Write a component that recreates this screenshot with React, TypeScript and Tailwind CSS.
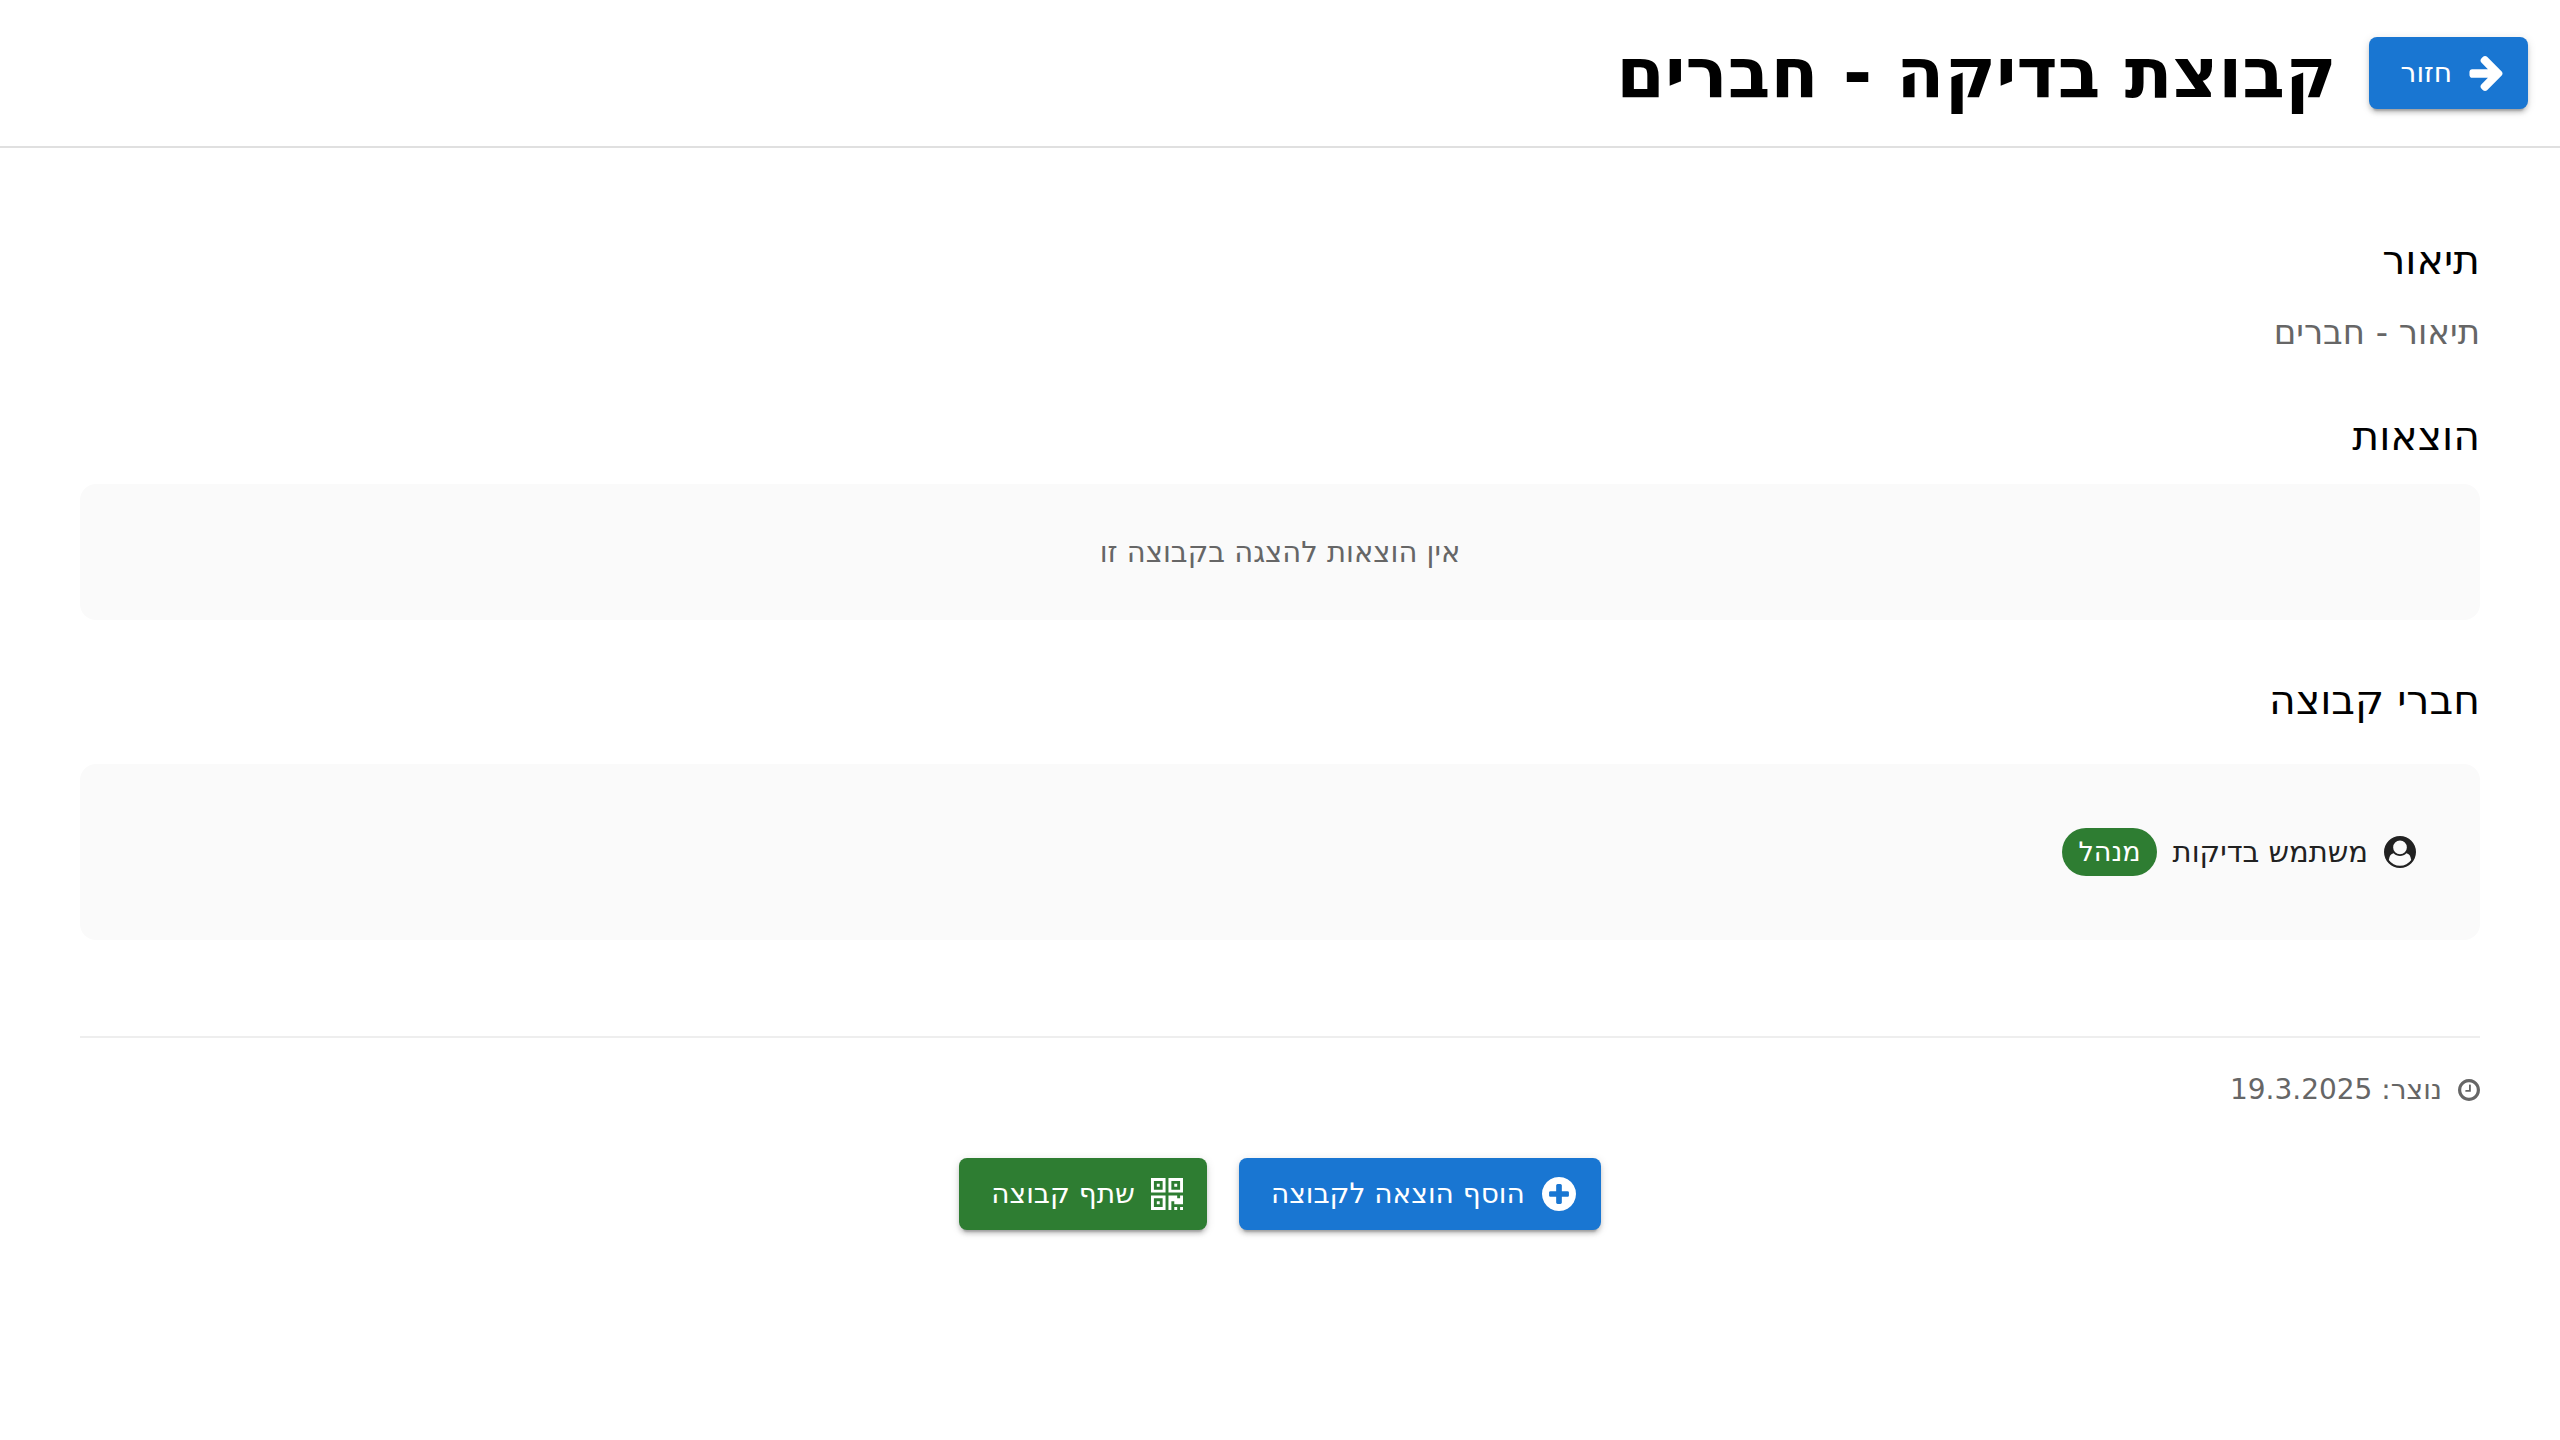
import type { ReactNode } from "react";

type IconProps = { viewBox: string; d: string; className: string };

function Icon({ viewBox, d, className }: IconProps) {
  return (
    <svg viewBox={viewBox} className={`shrink-0 fill-current ${className}`} aria-hidden="true">
      <path d={d} />
    </svg>
  );
}

const ARROW =
  "M1472 960q0 54-37 91l-651 651q-39 37-91 37-51 0-90-37l-75-75q-38-38-38-91t38-91l293-293H117q-52 0-84.5-37.5T0 1024V896q0-53 32.5-90.5T117 768h704L528 474q-38-36-38-90t38-90l75-75q38-38 90-38 53 0 91 38l651 651q37 35 37 90z";
const PLUS_CIRCLE =
  "M1216 960V832q0-26-19-45t-45-19H896V512q0-26-19-45t-45-19H704q-26 0-45 19t-19 45v256H384q-26 0-45 19t-19 45v128q0 26 19 45t45 19h256v256q0 26 19 45t45 19h128q26 0 45-19t19-45v-256h256q26 0 45-19t19-45zm320-64q0 209-103 385.5T1153.5 1561 768 1664t-385.5-103T103 1281.5 0 896t103-385.5T382.5 231 768 128t385.5 103T1433 510.5 1536 896z";
const CLOCK =
  "M896 544v448q0 14-9 23t-23 9H544q-14 0-23-9t-9-23v-64q0-14 9-23t23-9h224V544q0-14 9-23t23-9h64q14 0 23 9t9 23zm416 352q0-148-73-273t-198-198-273-73-273 73-198 198-73 273 73 273 198 198 273 73 273-73 198-198 73-273zm224 0q0 209-103 385.5T1153.5 1561 768 1664t-385.5-103T103 1281.5 0 896t103-385.5T382.5 231 768 128t385.5 103T1433 510.5 1536 896z";
const QR =
  "M384 1152v128H256v-128h128zm0-768v128H256V384h128zm768 0v128h-128V384h128zM128 1407h384v-383H128v383zm0-767h384V256H128v384zm768 0h384V256H896v384zM640 896v640H0V896h640zm512 512v128h-128v-128h128zm256 0v128h-128v-128h128zm0-512v384h-384v-128H896v384H768V896h384v128h128V896h128zM640 128v640H0V128h640zm768 0v640H768V128h640z";
const USER =
  "M1523 1339q-22-155-87.5-257.5T1251 963q-67 74-159.5 115.5T896 1120t-195.5-41.5T541 963q-119 16-184.5 118.5T269 1339q106 150 271 237.5t356 87.5 356-87.5 271-237.5zM1280 640q0-159-112.5-271.5T896 256 624.5 368.5 512 640t112.5 271.5T896 1024t271.5-112.5T1280 640zm512 256q0 182-71 347.5t-190.5 286T1245 1721t-349 71q-182 0-348-71t-286-191-191-286T0 896t71-348 191-286T548 71 896 0t348 71 286 191 191 286 71 348z";

const TONES = { primary: "bg-[#1976d2]", success: "bg-[#2e7d32]" };

function Button({ tone, icon, children }: { tone: keyof typeof TONES; icon: ReactNode; children: ReactNode }) {
  return (
    <button
      type="button"
      className={`flex h-18 shrink-0 cursor-pointer items-center gap-4 rounded-lg ps-6 pe-8 text-[28px] leading-8 text-white shadow-[0_6px_2px_-4px_rgba(0,0,0,0.2),0_4px_4px_0_rgba(0,0,0,0.14),0_2px_10px_0_rgba(0,0,0,0.12)] ${TONES[tone]}`}
    >
      {icon}
      {children}
    </button>
  );
}

function Heading({ children }: { children: ReactNode }) {
  return <h2 className="text-[41px] leading-12">{children}</h2>;
}

export default function App() {
  return (
    <div dir="rtl" lang="he" className="min-h-screen bg-white font-['DejaVu_Sans',sans-serif] text-black">
      <header className="flex items-center gap-8 border-b-2 border-[#e0e0e0] p-8">
        <Button tone="primary" icon={<Icon viewBox="0 181 1472 1558" d={ARROW} className="h-[35px] w-9" />}>
          חזור
        </Button>
        <h1 className="text-[70px] leading-[82px] font-bold">קבוצת בדיקה - חברים</h1>
      </header>

      <main className="px-20 pt-22 pb-20">
        <section>
          <Heading>תיאור</Heading>
          <p className="mt-6 text-[34px] leading-12 text-[#666]">תיאור - חברים</p>
        </section>

        <section className="mt-14">
          <Heading>הוצאות</Heading>
          <p className="mt-6 rounded-2xl bg-[#fafafa] p-12 text-center text-[29px] leading-10 text-[#666]">
            אין הוצאות להצגה בקבוצה זו
          </p>
        </section>

        <section className="mt-14">
          <Heading>חברי קבוצה</Heading>
          <ul className="mt-10 rounded-2xl bg-[#fafafa] p-16 text-[29px] leading-12 text-[#212121]">
            <li className="flex items-center gap-4">
              <Icon viewBox="0 0 1792 1792" d={USER} className="size-8" />
              <span>משתמש בדיקות</span>
              <span className="rounded-full bg-[#2e7d32] px-4 text-[27px] leading-12 text-white">מנהל</span>
            </li>
          </ul>
        </section>

        <footer className="mt-24 border-t-2 border-[#eee] pt-9">
          <p className="flex items-center gap-4 text-[28px] leading-8 text-[#666]">
            <Icon viewBox="0 128 1536 1536" d={CLOCK} className="size-[22px]" />
            <span>נוצר: 19.3.2025</span>
          </p>
          <div className="mt-13 flex flex-wrap justify-center gap-8">
            <Button tone="primary" icon={<Icon viewBox="0 128 1536 1536" d={PLUS_CIRCLE} className="h-[34px] w-9" />}>
              הוסף הוצאה לקבוצה
            </Button>
            <Button tone="success" icon={<Icon viewBox="0 128 1408 1408" d={QR} className="size-8" />}>
              שתף קבוצה
            </Button>
          </div>
        </footer>
      </main>
    </div>
  );
}
